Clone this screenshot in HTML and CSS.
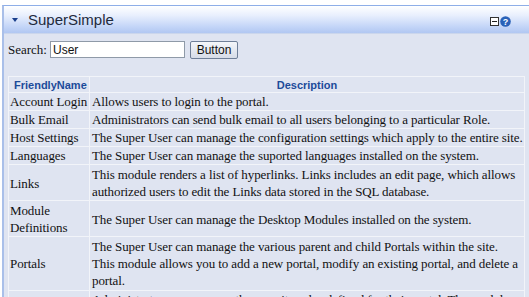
FILE: index.html
```html
<!DOCTYPE html>
<html>
<head>
<meta charset="utf-8">
<link rel="stylesheet" href="styles.css">
</head>
<body>
<div class="module">
  <div class="titlebar">
    <span class="arrow"></span>
    <span class="title">SuperSimple</span>
    <span class="icons">
      <span class="minbox"><span class="minbar"></span></span>
      <svg class="help" width="11" height="11" viewBox="0 0 11 11"><circle cx="5.5" cy="5.5" r="5.3" fill="#2a62b8"/><text x="5.6" y="9" text-anchor="middle" font-family="Liberation Sans, sans-serif" font-weight="bold" font-size="9" fill="#fff">?</text></svg>
    </span>
  </div>
  <div class="content">
    <div class="search">
      <span class="label">Search:</span>
      <input class="field" type="text" value="User">
      <button class="btn">Button</button>
    </div>
    <table class="grid">
      <colgroup><col class="w1"><col></colgroup>
      <thead>
        <tr><th class="c1">FriendlyName</th><th class="c2">Description</th></tr>
      </thead>
      <tbody>
        <tr><td>Account Login</td><td>Allows users to login to the portal.</td></tr>
        <tr><td>Bulk Email</td><td>Administrators can send bulk email to all users belonging to a particular Role.</td></tr>
        <tr><td>Host Settings</td><td>The Super User can manage the configuration settings which apply to the entire site.</td></tr>
        <tr><td>Languages</td><td>The Super User can manage the suported languages installed on the system.</td></tr>
        <tr class="multi"><td>Links</td><td>This module renders a list of hyperlinks. Links includes an edit page, which allows authorized users to edit the Links data stored in the SQL database.</td></tr>
        <tr class="multi"><td>Module Definitions</td><td>The Super User can manage the Desktop Modules installed on the system.</td></tr>
        <tr class="multi tall"><td>Portals</td><td>The Super User can manage the various parent and child Portals within the site.<br>This module allows you to add a new portal, modify an existing portal, and delete a<br>portal.</td></tr>
        <tr><td>Security Roles</td><td>Administrators can manage the security roles defined for their portal. The module allows you to add new security roles, modify existing security roles.</td></tr>
      </tbody>
    </table>
  </div>
</div>
</body>
</html>
```
FILE: styles.css
```css
html, body { margin: 0; padding: 0; background: #ffffff; overflow: hidden; }
body { padding-top: 5px; padding-left: 2px; }
.module {
  border-left: 2px solid #a9bfe9;
  border-top: 1px solid #8eaee8;
  background: #dfe4f1;
  height: 400px;
}
.titlebar {
  height: 27px;
  display: flex;
  align-items: center;
  background: linear-gradient(#ffffff 0%, #e8effd 35%, #c2d4f7 78%, #b1c7f2 100%);
  border-bottom: 1px solid #cbd6ec;
  font-family: "Liberation Sans", Arial, sans-serif;
}
.arrow {
  width: 0; height: 0;
  border-left: 3px solid transparent;
  border-right: 3px solid transparent;
  border-top: 4px solid #1a3f8c;
  margin-left: 8px;
  margin-right: 10px;
  margin-top: 1px;
}
.title { font-size: 15px; color: #1e2a3c; flex: 1; }
.icons { display: flex; align-items: center; margin-right: 18px; gap: 1px; margin-top: 3px; }
.minbox {
  width: 7px; height: 7px; border: 1px solid #333; background: #fff;
  display: flex; align-items: center; justify-content: center;
}
.minbar { width: 5px; height: 1px; background: #222; }
.help { display: block; }
.content { padding: 6px 3px 0 4px; }
.search { display: flex; align-items: center; height: 19px; font-family: "Liberation Serif", serif; font-size: 13px; color: #111; }
.label { margin-right: 3px; }
.field {
  width: 129px; height: 15px; padding: 0 2px; margin: 0;
  border: 1px solid #8f9aa8; background: #fff;
  font-family: "Liberation Sans", Arial, sans-serif; font-size: 12px; color: #111;
}
.btn {
  margin-left: 5px; height: 18px; width: 48px; padding: 0;
  border: 1px solid #6f7f98; border-radius: 2px;
  background: linear-gradient(#f4f6fa, #d6dce8);
  font-family: "Liberation Sans", Arial, sans-serif; font-size: 12px; color: #111;
}
.grid {
  margin-top: 17px;
  width: 517px;
  table-layout: fixed;
  border-collapse: collapse;
  font-family: "Liberation Serif", serif;
  font-size: 13px;
  letter-spacing: -0.1px;
  color: #111;
  border-right: 1px solid #b7bfcd;
}
.w1 { width: 81px; }
.grid th {
  font-family: "Liberation Sans", Arial, sans-serif;
  font-size: 11px;
  letter-spacing: 0;
  color: #1c4b9a;
  font-weight: bold;
  height: 15px;
  padding: 0 2px;
  border: 1px solid #f2f4f9;
}
.grid th.c1 { text-align: left; padding-left: 5px; }
.grid th.c2 { text-align: center; }
.grid td {
  border: 1px solid #f2f4f9;
  padding: 0 0 0 1px;
  line-height: 17px;
  vertical-align: middle;
}
.grid td + td { padding-left: 2px; }
.grid tbody td { height: 17px; }
.grid .multi td { padding-top: 1px; }
.grid .tall td { padding-bottom: 1px; }
```
